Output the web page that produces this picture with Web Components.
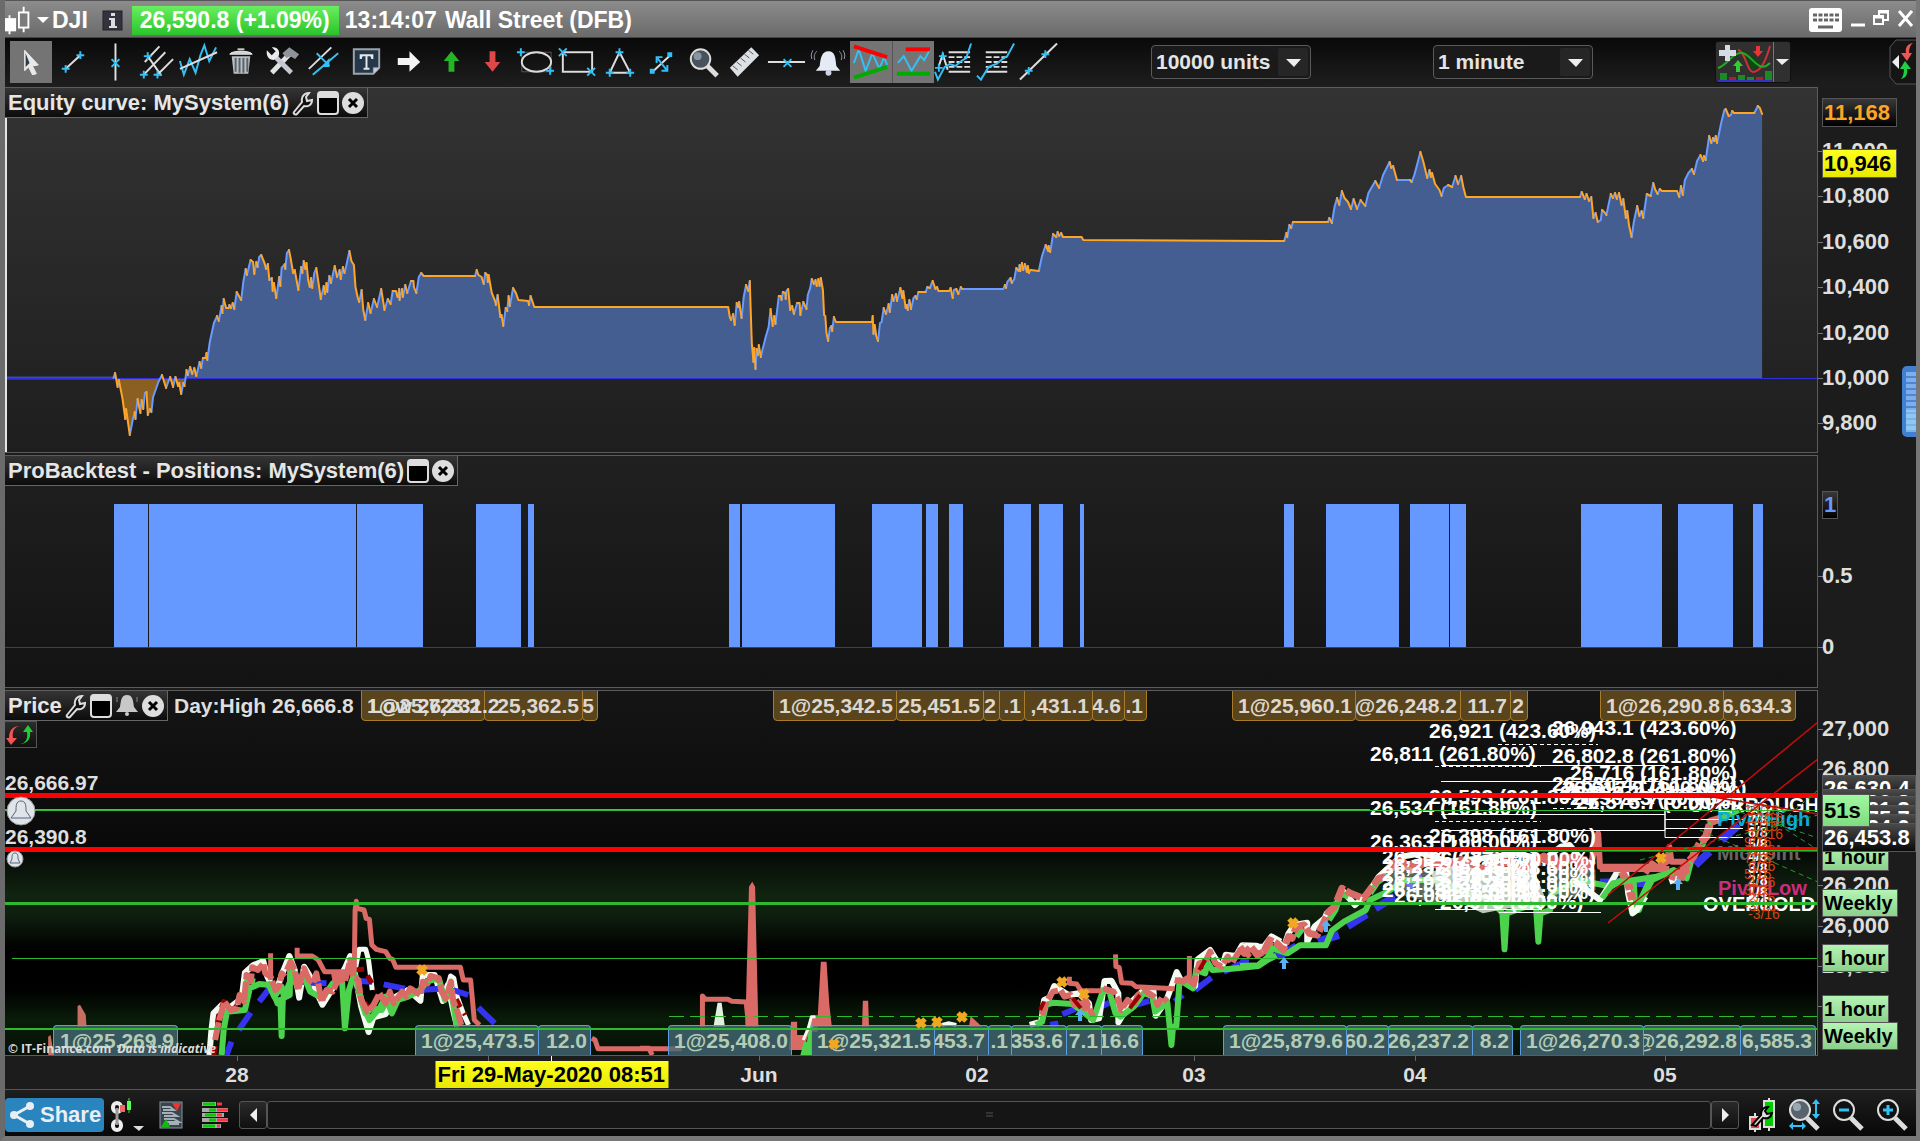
<!DOCTYPE html>
<html lang="en">
<head>
<meta charset="utf-8">
<title>DJI - Wall Street (DFB)</title>
<style>
  html, body { margin: 0; height: 100%; background: #1c1c1c; }
  body { font: bold 21px/24px "Liberation Sans", Arial, sans-serif; color: #dedede; }
</style>
</head>
<body>
<trading-window>
  <title-bar></title-bar>
  <tool-bar></tool-bar>
  <chart-stack>
    <equity-chart></equity-chart>
    <position-chart></position-chart>
    <price-chart></price-chart>
    <time-axis></time-axis>
  </chart-stack>
  <bottom-bar></bottom-bar>
</trading-window>
<script>
const define = (name, css, html) => customElements.define(name, class extends HTMLElement {
  constructor() {
    super();
    const root = this.attachShadow({ mode: 'open' });
    root.innerHTML = `<style>*{box-sizing:border-box}button{font:inherit;color:inherit;border:0;padding:0;background:none;cursor:pointer}svg{display:block}${css}</style>` + (typeof html === 'function' ? html(this) : html);
  }
});

/* Chart canvas: origin and extent in chart units, shared by drawings and labels */
const ORIGIN_X = 5, WIDTH = 1813;
const px = x => ((x - ORIGIN_X) / WIDTH * 100).toFixed(3) + '%';
const wd = w => (w / WIDTH * 100).toFixed(3) + '%';

define('trading-window', `
  :host{display:flex;flex-direction:column;height:100vh;min-height:700px;box-sizing:border-box;overflow:hidden;
    background:#1c1c1c;border:solid #777;border-width:0 4px 5px 5px;border-left-color:#6b6b6b;position:relative}
  :host::after{content:"";position:absolute;left:-5px;right:-4px;bottom:-5px;height:2px;background:#b85c0c}
`, `<slot></slot>`);

/* ---------- title bar ---------- */
define('title-bar', `
  :host{display:flex;align-items:center;height:38px;flex:none;margin:0 -4px 0 -5px;padding:2px 6px 0 4px;box-sizing:border-box;
    background:linear-gradient(#8c8c8c,#6a6a6a);border-top:1px solid #555;border-bottom:1px solid #444;color:#fff;
    font-size:23px;line-height:28px;white-space:nowrap}
  .sym{display:flex;align-items:center;gap:4px}
  .info{width:21px;height:21px;margin:0 9px 0 14px}
  .price{background:linear-gradient(#69ee5f,#2bc42b);height:29px;padding:0 8px;min-width:207px}
  .time{margin-left:6px}.name{margin-left:8px}
  .win{margin-left:auto;display:flex;align-items:center;gap:7px}
`, `
  <button class="sym" aria-label="Chart type"><svg width="28" height="34" viewBox="0 0 28 36" fill="none" stroke="#fff" stroke-width="2"><path d="M5 13v20M20 4v27"/><rect x="1" y="17" width="10" height="12" fill="#fff"/><rect x="15" y="10" width="10" height="16" fill="#7c7c7c"/></svg>
  <svg width="14" height="8"><path d="M1 1h12L7 7z" fill="#fff"/></svg></button>
  <span style="margin-left:2px">DJI</span>
  <button class="info" aria-label="Information"><svg width="21" height="21"><rect x="1" y="1" width="19" height="19" fill="#333340" stroke="#222"/><rect x="9" y="3" width="4" height="3" fill="#ddd"/><path d="M7 8h6v8h2v2H7v-2h2v-6H7z" fill="#ddd"/></svg></button>
  <span class="price">26,590.8 (+1.09%)</span><span class="time">13:14:07</span><span class="name">Wall Street (DFB)</span>
  <span class="win">
   <button aria-label="Keyboard"><svg width="35" height="26"><rect x="1" y="1" width="33" height="24" rx="3" fill="#fff"/><path d="M5 8h26M5 13h26" stroke="#666" stroke-width="3" stroke-dasharray="4 1.5"/><path d="M10 20h15" stroke="#666" stroke-width="3"/></svg></button>
   <button aria-label="Minimise"><svg width="16" height="26"><path d="M1 18h14" stroke="#fff" stroke-width="3"/></svg></button>
   <button aria-label="Restore"><svg width="17" height="26" fill="#777" stroke="#fff" stroke-width="2"><rect x="6" y="4" width="9" height="9"/><rect x="1" y="9" width="9" height="8"/><path d="M6 5h9M1 10h9" stroke-width="3"/></svg></button>
   <button aria-label="Close"><svg width="17" height="26"><path d="M2 4l13 15M15 4L2 19" stroke="#fff" stroke-width="3"/></svg></button>
  </span>`);

/* ---------- tool bar ---------- */
const W = 'stroke="#ddd" stroke-width="2" fill="none"', C = 'stroke="#35c0f5" stroke-width="2" fill="none"';
const plus = (x, y) => `<path d="M${x-4} ${y}h8M${x} ${y-4}v8" ${C}/>`;
const cross = (x, y) => `<path d="M${x-4} ${y-4}l8 8m0-8l-8 8" ${C}/>`;
const tools = [
 ['Select', '<path d="M15 9l14 15-6 1 4 8-4 1-4-8-4 4z" fill="#e8e8e8" stroke="#eee"/><path d="M16 12v14l4-4z" fill="#2d3e48"/>', 1],
 ['Segment', `<path d="M14 28L29 14" ${W}/>${plus(14,28)}${plus(29,14)}`],
 ['Vertical line', `<path d="M22 2v38" ${W}/>${cross(22,22)}`],
 ['Pitchfork', `<path d="M8 34L30 11M9 21L24 5M22 34L38 18M12 15l14 20" ${W}/>${plus(12,15)}${plus(8,34)}${plus(22,34)}`],
 ['Regression', `<path d="M2 20l4 14 6-16 6 14 5-18 4-10 5 16 7-14" ${C}/><path d="M2 28L40 11" ${W}/>`],
 ['Delete', '<path d="M12 15h19l-2 18H14z" fill="#b9bfc4"/><path d="M16 17v14M20 17v15M24 17v15M28 17v14" stroke="#59636a" stroke-width="2"/><path d="M10 13c1-4 22-4 23 0z" fill="#ccd0d4" stroke="#eee"/><path d="M18 8h7" stroke="#ccc" stroke-width="2"/>'],
 ['Settings', '<path d="M10 32L29 12" stroke="#e0e2e4" stroke-width="5"/><path d="M30 32L12 14" stroke="#c3c9ce" stroke-width="5"/><path d="M5 9l5 5 4-4-4-4c6-1 9 4 7 9l-5 4C7 19 4 15 5 9z" fill="#e8eaec"/><path d="M21 12l7-6 10 7-4 5-5-3-4 2z" fill="#8e9499"/>'],
 ['Parallel lines', `<path d="M5 28L28 6" ${W}/><path d="M9 34L35 12M13 12l13 13" ${C}/><path d="M26 17v9h-8z" fill="#35c0f5"/>`],
 ['Text', '<path d="M8 8h26v19l-6 6H8z" fill="#25384a" stroke="#9aa5ad" stroke-width="2"/><path d="M34 27h-6v6" fill="#ccd" stroke="#9aa5ad"/><path d="M14 13h14v5h-2l-1-3h-3v12h2v2h-6v-2h2V15h-3l-1 3h-2z" fill="#e5e8ea"/>'],
 ['Arrow', '<path d="M10 17h12v-7l11 11-11 10v-7H10z" fill="#f4f4f4"/>'],
 ['Up', '<path d="M22 10l8 10h-5v11h-6V20h-5z" fill="#25b525"/>'],
 ['Down', '<path d="M21 31l-8-10h5V10h6v11h5z" fill="#e04848"/>'],
 ['Ellipse', `<rect x="8" y="11" width="30" height="20" stroke="#555" fill="none"/><ellipse cx="23" cy="21" rx="15" ry="10" ${W}/>${plus(7,11)}${plus(37,30)}`],
 ['Rectangle', `<rect x="7" y="11" width="30" height="20" ${W}/>${cross(7,11)}${cross(36,31)}`],
 ['Triangle', `<path d="M22 11L12 32h21z" ${W}/>${plus(22,11)}${plus(12,32)}${plus(33,32)}`],
 ['Move', `<path d="M14 30L31 14" ${W}/><path d="M17 16l11 14m0-6v6h-6M17 22v-6h6" ${C}/><path d="M10 28h5v5h-5zM28 11h5v5h-5z" fill="#35c0f5"/>`],
 ['Zoom', '<path d="M25 24l11 11" stroke="#ddd" stroke-width="5"/><circle cx="19" cy="18" r="10" fill="#48525c" stroke="#ddd" stroke-width="2"/><circle cx="16" cy="15" r="4" fill="#8796a1"/>'],
 ['Ruler', '<path d="M6 27L28 6l8 8-22 22z" fill="#dde1e5"/><path d="M9 25l5 4M13 21l5 4M17 17l5 4M21 13l5 4M25 9l5 4" stroke="#555"/>'],
 ['Horizontal line', `<path d="M2 21h38" ${W}/>${cross(22,22)}`],
 ['Alert', '<path d="M21 10c7 0 7 7 8 15l4 5H8l4-5c1-8 2-15 9-15z" fill="#e5ebf5"/><circle cx="21" cy="32" r="3" fill="#ccd4e4"/><path d="M9 10c-3 3-3 6-2 9M5 9c-2 4-2 6-1 9M32 10c3 3 3 6 2 9M36 9c2 4 2 6 1 9" stroke="#99a" fill="none"/>'],
 ['Auto trend lines', `<path d="M4 22l5-14 7 22 7-18 7 16 5-12 3 8" ${C}/><path d="M4 5l34 11" stroke="red" stroke-width="4"/><path d="M4 37l34-11" stroke="#0a0" stroke-width="4"/>`, 1],
 ['Auto supports', `<path d="M5 22l6-7 8 15 9-15 4 4 6-11" ${C}/><path d="M13 8h25" stroke="red" stroke-width="4"/><path d="M4 33h34" stroke="#0a0" stroke-width="4"/>`, 1],
 ['Fibonacci', `<path d="M15 11h22M15 31h22" ${W}/><path d="M15 16h22M15 21h22M15 26h22" ${W} stroke-dasharray="6 2"/><path d="M5 25L9 13l5 16" ${W}/><path d="M1 31l3 8 7-13 5-3 6 2 6-5 5-3 5-15" ${C}/>${plus(9,15)}${plus(5,27)}`],
 ['Retracement', `<path d="M10 11h22M10 31h22" ${W}/><path d="M10 16h22M10 21h22M10 26h22" ${W} stroke-dasharray="6 2"/><path d="M1 35l4 4 8-13 8-3 6-5 5-3 7-13" ${C}/>`],
 ['Line', `<path d="M2 39L40 2" ${W}/>${plus(11,30)}${plus(28,13)}`],
];
define('tool-bar', `
  :host{display:flex;align-items:center;height:49px;flex:none;box-sizing:border-box;padding:0 0 1px 5px;
    background:linear-gradient(#090909,#1e1e1e);font-size:21px}
  .tools{display:flex;flex:none}
  .tools button{width:42px;height:42px}
  .on{background:#747474!important}
  .on + .on{border-left:1px solid #555}
  .pick{position:relative;display:block;flex:none;width:160px;height:34px}
  .gap1{flex:0 1 91px}.gap2{flex:0 1 122px}
  select{appearance:none;font:inherit;color:#e4e4e4;width:100%;height:34px;padding:0 0 0 4px;background:#1a1a1a;border:1px solid #5a5a5a;border-radius:4px;text-indent:0}
  .pick svg{position:absolute;right:3px;top:3px;pointer-events:none}
  .ind{display:flex;flex:none;width:76px;height:42px;background:#303030;border:1px solid #111;border-radius:3px}
  .ind button{flex:none}
  .ind button+button{border-left:1px solid #777;width:18px;display:flex;align-items:center;justify-content:center}
  .tab{margin-left:auto;width:27px;height:46px}
`, `
  <div class="tools">${tools.map(([n, s, on]) => `<button aria-label="${n}" ${on ? 'class="on"' : ''}><svg viewBox="0 0 42 42" width="41" height="42">${s}</svg></button>`).join('')}</div>
  <span class="gap1"></span>
  <label class="pick"><select aria-label="Units"><option>10000 units</option></select><svg width="30" height="28"><rect width="30" height="28" rx="2" fill="#262626"/><path d="M8 11h15l-7 8z" fill="#eee"/></svg></label>
  <span class="gap2"></span>
  <label class="pick"><select aria-label="Timeframe"><option>1 minute</option></select><svg width="30" height="28"><rect width="30" height="28" rx="2" fill="#262626"/><path d="M8 11h15l-7 8z" fill="#eee"/></svg></label>
  <span class="gap2"></span>
  <span class="ind"><button aria-label="Add indicator"><svg width="57" height="40" viewBox="0 0 57 40">
    <path d="M22 8c8 2 9 22 15 22S49 22 54 4" stroke="#c33" stroke-width="2" fill="none"/><path d="M27 10c5 4 6 16 11 18l5-8c-5-5-9-10-16-10z" fill="#0c4a10"/>
    <path d="M2 26c10-3 14-16 24-15s16 22 28 10" stroke="#2a2" stroke-width="2" fill="none"/>
    <path d="M9 3h5v5h6v6h-6v5H9v-5H3V8h6z" fill="#d5dae5"/><path d="M22 18l5 6h-3v6h-4v-6h-3z" fill="#3c3"/><path d="M42 15l5-6h-3V4h-4v5h-3z" fill="#e33"/>
    <path d="M4 31h7v7H4zM22 33h7v5h-7zM31 35h7v3h-7zM49 29h7v9h-7z" fill="#1a8a22"/><path d="M13 35h7v3h-7zM40 35h7v3h-7z" fill="#a22"/><path d="M2 39h54" stroke="#33c" stroke-width="2"/></svg></button>
    <button aria-label="More indicators"><svg width="13" height="8"><path d="M0 1h13L6 7z" fill="#eee"/></svg></button></span>
  <button class="tab" aria-label="Show panel"><svg width="27" height="46" viewBox="0 0 27 46"><path d="M27 1H7L1 8v30l6 7h20" fill="#151515" stroke="#555"/><path d="M10 16v14l-7-7z" fill="#eee"/><path d="M24 4c-6 1-8 5-7 10h-5l6 8 5-8h-3c0-4 1-8 4-10z" fill="#e55"/><path d="M12 40c5-1 7-5 6-10h4l-6-8-5 8h4c0 4-1 8-3 10z" fill="#2c4"/></svg></button>`);

/* ---------- panel pieces ---------- */
const wrench = '<svg width="22" height="26" viewBox="0 0 22 26"><path d="M2 22l8-10c-1-5 2-9 7-9l-3 4 1 4 5-1c0 5-4 7-8 6l-7 8c-2 1-4 0-3-2z" fill="#111" stroke="#ddd" stroke-width="2"/></svg>';
const maxi = '<svg width="22" height="24"><rect x="1" y="1" width="20" height="22" rx="3" fill="#000" stroke="#ddd" stroke-width="2"/><path d="M2 4h18" stroke="#ddd" stroke-width="6"/></svg>';
const close = '<svg width="22" height="24"><ellipse cx="11" cy="12" rx="11" ry="11" fill="#ddd"/><path d="M7 8l8 8m0-8l-8 8" stroke="#000" stroke-width="3"/></svg>';
const bell = '<svg width="24" height="24" viewBox="0 0 24 24"><path d="M12 1c6 0 6 6 7 12l4 5H1l4-5C6 7 6 1 12 1z" fill="#c8c8c8"/><circle cx="12" cy="20" r="2" fill="#ccc"/><path d="M2 3v5M22 3v5" stroke="#888"/></svg>';
define('panel-header', `
  :host{position:absolute;left:0;top:0;z-index:3;display:flex;align-items:center;gap:3px;height:31px;box-sizing:border-box;padding:0 3px 0 3px;
   background:linear-gradient(#353535,#0c0c0c);border:1px solid #666;border-left:0;white-space:nowrap;color:#e6e6e6;font-size:22px}
`, el => `<slot></slot>` + (el.getAttribute('icons') || '').split(' ').map(i =>
   `<button aria-label="${i}">${{ wrench, maxi, close, bell }[i]}</button>`).join(''));

const panelCss = (bg) => `
  :host{display:grid;grid-template-columns:minmax(0,1813fr) 98px;min-height:0;position:relative}
  .plot{position:relative;overflow:hidden;background:${bg}}
  .plot::after{content:"";position:absolute;inset:0;border:1px solid #5c5c5c;border-left:0;z-index:4;pointer-events:none}
  .plot>svg{position:absolute;inset:0;width:100%;height:100%}
  .axis{position:relative;background:#1c1c1c;font-size:22px}
  .axis span{position:absolute;left:4px;line-height:24px;height:24px;margin-top:-12px;white-space:nowrap}
  .axis i{position:absolute;left:0;width:5px;height:1px;background:#777}
  .axis .tag{border:1px solid #555;padding:0 1px;left:4px;z-index:2}
  .axis .small{font-size:20px}
`;
const axis = (top, h, labels, extra = '') => `<div class="axis">${labels.map(([t, y]) =>
  `<i style="top:${((y - top) / h * 100).toFixed(3)}%"></i><span style="top:${((y - top) / h * 100).toFixed(3)}%">${t}</span>`).join('')}${extra}</div>`;
const tag = (top, h, t, y0, y1, w, bg, col, z = 2, cls = '') => `<span class="tag ${cls}" style="top:${((y0 - top) / h * 100).toFixed(3)}%;margin-top:0;height:${y1 - y0}px;line-height:${y1 - y0 - 2}px;width:${w}px;background:${bg};color:${col};z-index:${z}">${t}</span>`;

/* ---------- equity curve ---------- */
const runs = [
 [0, 2.45, 220, `13,475 278,475 282,459 288,500 291,480 300,535 307,598 309,567 318,646 325,600 330,575 332,597 337,537 344,578 347,540 351,568 355,520 359,516 362,586 368,568 371,577 375,530 383,505 388,485 397,465 407,504 412,485 417,470 424,502 430,470 436,497 439,488 444,523 449,490 452,498 457,450 460,465 466,440 471,462 476,443 481,468 489,427 493,444 497,415 503,413 506,400 508,420 514,365 524,310 532,288 536,304 543,258 545,280 548,238 554,265 560,265 562,255 566,265 570,250 574,268 580,215 591,241 596,185 602,147 605,165 614,119 620,125 623,162 628,125 631,140 635,110 640,104 648,130 652,148 656,133 660,180 666,175 668,212 671,190 677,235 684,172 687,198 690,145 698,132 699,148 703,100 708,90 712,115 718,158 722,150 731,210 738,140 741,160 744,122 748,148 751,128 755,180 759,200 762,175 765,205 770,160 775,143 780,185 786,236 793,198 796,222 800,190 802,215 807,168 811,190 820,137 826,170 832,150 835,178 840,140 844,160 850,130 856,92 861,122 867,135 871,200 876,230 880,245 886,210 890,270 895,300 902,248 908,280 916,237 924,262 934,208 942,270 950,238 957,252 962,212 970,213 974,232 978,208 979,240 985,208 987,232 993,195 998,220 1007,182 1013,183 1014,200 1020,220 1026,170 1032,158 1038,167 1164,167 1168,149 1172,166 1180,172 1185,192 1189,160 1194,165 1195,185 1197,165 1205,220 1214,245 1215,255 1219,225 1226,290 1229,285 1233,318 1239,265 1243,272 1246,228 1249,258 1257,205 1264,220 1270,241 1294,242 1296,255 1300,227 1309,262`],
 [640, 2.45, 220, `216,262 220,290 223,300 228,282 232,315 237,250 240,262 243,247 249,295 254,230 260,195 265,212 269,182 271,260 274,370 278,425 280,385 283,447 286,388 289,405 291,375 296,410 300,390 308,350 315,320 320,267 325,318 329,287 332,312 340,228 345,227 347,240 350,217 356,218 357,238 359,212 363,208 368,270 373,258 377,283 385,248 391,250 393,286 400,245 408,268 411,225 417,205 421,176 426,192 430,180 433,198 437,176 440,197 443,175 448,210 451,285 454,288 457,340 461,363 465,325 469,318 471,334 475,290 480,307 568,307 570,288 572,342 575,315 579,347 583,363 588,310 592,307 597,265 603,283 609,253 612,275 618,225 621,243 627,222 630,243 638,205 643,235 645,213 651,265 654,255 656,270 660,240 664,268 670,235 675,228 678,236 682,217 700,217 704,200 710,203 717,183 724,208 728,200 731,214 757,214 761,204 766,235 769,210 775,208 780,222 786,201 790,207 890,206 894,195 897,205 900,185 908,174 911,190 917,178 922,143 928,152 930,135 932,152 936,128 939,150 943,133 948,155 950,138 953,160 957,151 977,152 985,108 994,75 1000,92 1001,78 1005,97 1012,42 1020,50 1023,36 1027,48 1032,40 1036,52 1082,52 1086,61`],
 [1240, 2.306, 90, `102,452 107,430 109,441 114,405 118,414 122,397 203,397 206,383 212,398 218,350 224,323 229,346 235,303 241,325 249,335 256,356 262,327 270,356 278,330 289,348 296,310 312,273 321,294 330,255 345,216 349,235 353,227 362,270 392,269 396,275 402,255 410,215 416,186 423,215 432,265 437,240 440,262 443,250 450,283 460,300 465,318 470,293 480,285 489,290 497,257 503,283 510,257 515,290 521,320 784,320 788,305 795,328 799,312 805,333 810,322 815,383 820,368 825,396 832,390 835,360 840,365 845,374 855,312 860,325 865,310 869,328 874,310 880,345 884,327 890,385 893,363 897,405 903,440 908,395 916,348 921,377 926,362 930,383 938,312 947,318 953,280 957,297 963,312 968,296 973,304 1008,304 1013,320 1017,288 1021,315 1026,270 1034,250 1042,237 1047,252 1054,213 1062,195 1068,212 1070,198 1074,210 1082,138 1087,160 1091,145 1094,152 1097,138 1100,158 1110,97 1117,60 1120,56 1127,77 1132,76 1135,63 1139,70 1186,70 1194,47 1199,55 1204,72`]];
const equity = runs.flatMap(([x0, s, y0, d]) => d.split(' ').map(p => { const [x, y] = p.split(',').map(Number); return [+(x0 + x / s).toFixed(1), Math.round(y0 + y / 3)]; }));
let up = '', down = '';
for (let i = 2; i < equity.length; i++) {
  const [a, b] = [equity[i - 1], equity[i]], seg = `M${a}L${b}`;
  if (b[1] < a[1] || (a[1] === b[1] && (Math.abs(a[0] - 962) < 2 || Math.abs(a[0] - 1397) < 2))) up += seg; else down += seg;
}
const area = `M5,378L${equity.join('L')}V378Z`;
define('equity-chart', panelCss('linear-gradient(#333,#1e1e1e)'), `
 <div class="plot"><svg viewBox="5 87 1813 366" preserveAspectRatio="none">
  <clipPath id="a"><rect x="0" y="87" width="1820" height="291"/></clipPath><clipPath id="b"><rect x="0" y="378" width="1820" height="80"/></clipPath>
  <path d="${area}" fill="#455e92" clip-path="url(#a)"/><path d="${area}" fill="#8a5f20" clip-path="url(#b)"/>
  <path d="M114 378h-109" stroke="#3f4f90" stroke-width="3"/><path d="M5 378.5H1818" stroke="#3030e0"/>
  <path d="${up}" stroke="#6a9bff" stroke-width="2" stroke-linecap="round"/><path d="${down}" stroke="#ffa526" stroke-width="2" stroke-linecap="round"/>
  <path d="M6 118V452" stroke="#e4e4e4" stroke-width="2"/></svg>
  <panel-header icons="wrench maxi close">Equity curve: MySystem(6)</panel-header></div>
 ${axis(87, 366, [['11,000',151],['10,800',196],['10,600',242],['10,400',287],['10,200',333],['10,000',378],['9,800',423]],
   tag(87,366,'11,168',98,127,75,'linear-gradient(#383838,#000)','#ffa526') + tag(87,366,'10,946',149,178,75,'linear-gradient(#ffff20,#e8e800)','#000'))}`);

/* ---------- positions ---------- */
const bars = [[114,148],[149,356],[357,423],[476,521],[528,534],[729,740],[742,835],[872,922],[926,938],[949,963],[1004,1031],[1039,1063],[1080,1084],[1284,1294],[1326,1399],[1410,1449],[1450,1466],[1581,1662],[1678,1733],[1753,1763]];
define('position-chart', panelCss('linear-gradient(#202020,#131313)'), `
 <div class="plot"><svg viewBox="5 455 1813 233" preserveAspectRatio="none">
  ${bars.map(([a, b]) => `<rect x="${a}" y="504" width="${b - a}" height="143" fill="#6699ff"/>`).join('')}
  <path d="M5 647.5H1818" stroke="#3030c8"/></svg>
  <panel-header icons="maxi close">ProBacktest - Positions: MySystem(6)</panel-header></div>
 ${axis(455, 233, [['0.5',576],['0',647]], tag(455,233,'1',491,519,16,'linear-gradient(#383838,#000)','#6699ff'))}`);

/* ---------- price ---------- */
const L = (d, c, w, x = '') => `<path d="M${d}" fill="none" stroke="${c}" stroke-width="${w}" stroke-linejoin="round" vector-effect="non-scaling-stroke" ${x}/>`;
const RED = '#d96a66', GRN = '#4cd24c', WHT = '#f2faf2', BLU = '#3434f0', DRK = '#900';
const left = `<g transform="translate(0 680) scale(.40816 .33333)">
 <path d="M190 1040V978l6-4 14 30 2 36zM118 1125v-55l6-5 8 60z" fill="#c76e60"/>
 ${L('513,1125 518,1050 523,1000 543,975 560,985 592,955 600,878 620,856 645,843 655,890 675,940 690,885 709,828 722,870 733,953 745,860 765,900 775,935 790,974 810,935 830,895 845,865 858,828 868,870 885,980 903,1056 915,1012 945,1002 970,950 1000,930 1030,962 1036,885 1065,885 1085,963 1097,915 1112,1000 1120,1040',WHT,6)}
 ${L('870,870 880,808 896,808 903,840 912,930M1097,920 1104,888 1112,895 1120,950 1135,1000 1148,1035',WHT,5)}
 ${L('555,1125 567,1085M585,1050 614,998M635,965 660,925M705,908 745,905M760,908 800,910M870,902 912,905M940,913 992,926M1025,930 1078,926M1110,930 1147,945M1172,983 1212,1030',BLU,6)}
 ${L('524,1125 535,1010 548,965 570,990 590,965 612,905M870,870 892,868 920,930M860,880 880,940 905,990 940,985M1100,915 1125,975 1140,1005',DRK,5,'stroke-dasharray="9 7"')}
 ${L('543,1125 548,1050 556,995 600,990 612,925 635,912 662,915 680,970 687,960 690,1068 693,955 710,945 711,850 728,920 745,890 760,935 790,955 815,910 838,900 845,1045 855,930 868,880 890,980 905,1020 930,985 945,950 960,1000 975,960 1000,950 1030,930 1045,905 1075,895 1090,960 1105,930 1118,1030 1125,1038',GRN,6)}
 ${L('598,960 606,900 625,905M655,905 672,950 690,920 696,950 712,900M880,940 895,1000 912,985 935,990 948,960 962,990',GRN,6)}
 ${L('527,1080 537,1020 550,965 565,990 580,985 587,945 598,965 604,885 615,900 618,862 632,870 645,850 650,880 663,890 675,930 685,915 690,880 698,890M703,870 712,845 722,870 730,930 745,865 757,900 767,910 775,880 788,965 800,930 815,935 830,895 845,905 858,840 866,890 878,900 885,960 900,995 915,975 930,940 945,970 955,935 965,970 985,935 995,950 1005,925 1030,945 1036,905 1048,910 1055,888 1075,895 1082,935 1092,955 1105,905 1110,960 1122,1000 1130,1035',RED,6,'stroke-dasharray="18 2"')}
 ${L('663,820V900M728,803V828L765,828 780,840 795,875 845,875 868,870 870,690 873,664 875,685 892,690 897,715 905,718 911,795 922,808 945,815 955,835 962,838 970,862 1128,862 1135,900 1153,900 1162,1020 1175,1035M1450,1075 1458,1080 1465,1106 1670,1106',RED,5)}
 <path d="M810 872h40l-5 35h-30z" fill="${RED}"/></g>`;
const mid = `<g transform="translate(640 680) scale(.40816 .33333)">
 ${L('153,1040 153,948 160,958 215,958 225,964 260,966 266,1035',RED,5)}
 <path d="M180 1040l10-72h10l8 72z" fill="#dff0df"/><path d="M258 1040l9-420 8-15 7 15 8 420zM434 1040l9-195h14l7 130 6 65zM544 1040l2-78h13l2 78zM370 1025h15v40h20l15-55 15-5v50h-20l-15 55h-35zM806 1040l4-32 28 32z" fill="${RED}"/>
 <path d="M393 1125l8-40 8 0 8-60 4 0v100z" fill="${GRN}"/>${L('400,1080 412,1045 420,1010 430,1010',WHT,3)}
 ${L('740,1035 755,1030 775,1035',WHT,4)}
 ${L('0,1105 22,1105 30,1125',RED,5)}
 ${L('1005,1035 1025,1030M1035,1003 1070,985M1120,985 1150,968M1215,975 1248,963M1310,965 1330,945M1360,930 1400,893M1430,875 1475,850M1520,850 1560,825',BLU,6)}
 ${L('955,1035 983,1025 990,960 1003,953 1015,918 1050,945 1075,940 1100,970 1105,1020 1125,1015 1138,903 1155,902 1172,940 1172,1027 1200,970 1230,935 1258,932 1264,1007 1290,960 1315,876 1325,900 1360,918 1366,838 1397,810 1425,865 1435,824 1460,828 1475,796 1510,797 1530,812 1548,770 1570,785',WHT,6)}
 ${L('970,1035 985,1025 995,975 1012,968 1060,972 1080,990 1110,1020 1135,930 1150,935 1165,1000 1178,1010 1210,980 1235,938 1255,950 1262,995 1292,968 1302,1095 1306,1040 1314,1040 1322,900 1355,925 1363,870 1385,880 1390,845 1402,870 1450,866 1515,858 1540,838 1570,820',GRN,6)}
 ${L('985,1005 997,962 1012,935 1030,930 1040,950 1055,945 1065,975 1085,960 1090,985 1105,985M1085,940 1110,1010M1135,925 1160,935 1172,960 1178,990 1195,960 1210,975 1220,945 1235,930 1260,950 1268,975 1280,950 1292,965M1310,900 1330,905 1340,895 1357,912 1370,850 1385,845 1397,815 1410,850 1425,860 1440,830 1450,850 1465,820 1480,800 1490,825 1500,805 1515,825 1530,815 1548,785 1570,795',RED,6,'stroke-dasharray="14 3"')}
 ${L('1052,890V910L1070,912 1080,932 1130,932M1165,823 1166,860 1174,862 1180,908 1205,910 1215,920 1310,926M1346,905V828',RED,5)}
 ${L('980,990 990,965M1060,955 1080,985M1200,985 1225,945M1370,870 1385,840',DRK,4)}</g>`;
const right = `<g transform="translate(1240 680) scale(.43366 .33333)">
 ${L('0,846 20,850M85,830 130,800M180,785 228,765M248,738 292,702M312,685 357,650M385,620 420,590M830,608 880,606M895,608 940,610M1050,555 1083,515M1110,480 1150,435',BLU,8)}
 ${L('0,800 30,800 55,800 72,770 88,785 100,805 112,760 125,735 155,728 155,785 172,740 195,715 200,700 218,690 235,630 265,675 295,640 320,590 345,560 370,530 420,520 480,545 560,535 640,520 700,540 740,500 760,495 800,560',WHT,6)}
 ${L('0,858 42,856 65,830 75,805 110,820 138,796 198,796 212,752 240,725 290,690 300,660 345,632 380,600 460,600 520,640 580,660 605,700 610,808 615,700 682,670 688,785 693,700 715,690 720,640 780,600 855,620 880,600 908,610 912,690 920,690 930,650 950,600 1000,570 1030,595 1045,520 1065,500 1085,430 1150,390',GRN,6)}
 ${L('130,770 145,745M205,720 220,690 232,640 250,650M300,640 318,605 335,590 345,600',GRN,6)}
 ${L('0,800 10,820 25,800 40,825 55,815 68,780 85,790 100,810 112,770 120,775 130,740 148,735 160,760 178,765 190,735 205,695 218,680 235,625 255,640 285,655 305,620 320,595 335,590 345,565 365,560 420,545 500,570 620,560 700,545 740,530 800,540',RED,7,'stroke-dasharray="16 2"')}
 ${L('345,560 370,540 395,570 430,545 470,560 510,540 560,570 610,545 650,565 700,530 730,560 770,530 790,570 815,540',RED,8)}
 <path d="M440 575l60-20 60 15 60-10 60 15 30 100-50 15-40-5-60 15-50-30-50-10z" fill="#e5f3e5" opacity=".8"/>
 <path d="M345 565l40-5 70 20v90l-70-20-40-25zM710 570l50-10 60 10v60l-60 25-50-5z" fill="#e5f3e5" opacity=".35"/>
 ${L('770,600 830,660 850,620 870,575 890,570 895,640 905,700 915,690 935,650M990,605 1020,590',WHT,6)}
 ${L('818,460 812,540 826,460 830,560 965,560 985,545 990,500 995,545 1025,545 1030,575 1000,580 995,600M830,567 990,567M935,580 950,550 970,570',RED,6)}
 ${L('880,575 895,610 905,660M1015,600 1025,560 1045,530 1060,490 1075,470 1085,425 1110,415',RED,8,'stroke-dasharray="20 2"')}
 ${L('835,655 860,610 960,590 1000,575M920,670 945,600',GRN,6)}</g>`;
const star = (x, y) => `<path d="M${x-4} ${y-4}l8 8m0-8l-8 8" stroke="#f0a820" stroke-width="5"/>`;
const arr = (x, y) => `<path d="M${x} ${y}l5 6h-3v6h-4v-6h-3z" fill="#5ab0f8"/>`;
const under = `<g fill="none">
 <g stroke="#fff"><path d="M1441 765.5H1665M1441 781.5H1660M1441 814.5H1665M1441 830.5H1665l0-34v41h78M1665 819.5h78M1665 828.5h78M1435 909.5h107M1499 912.5h102"/>
 <path d="M1498 744.5h100M1435 766.5h106M1553 808.5h48M1435 821.5h106" stroke-dasharray="4 3"/></g></g>`;
const over = `<g fill="none">
 <path d="M12 958.5H1818M5 810.5H1818M1485 850.5H1818" stroke="#2fb92f"/><path d="M5 809.5H1370" stroke="#c08060"/><path d="M669 1016.5H1818" stroke="#2fb92f" stroke-dasharray="15 6"/>
 <path d="M5 903.5H1818" stroke="#2fb92f" stroke-width="3"/><path d="M5 1029H1818" stroke="#2fb92f" stroke-width="2"/>
 <path d="M5 795.5H1818M5 849.5H1818" stroke="red" stroke-width="5"/><path d="M1485 850.5H1818" stroke="#2fb92f"/>
 <g stroke="#2a9a2a" stroke-dasharray="5 4"><path d="M1640 860L1818 815M1700 830L1818 882M1740 800L1818 850M1740 812L1818 838M1760 840L1818 790"/></g>
 <g stroke="#c40c0c" stroke-width="1.5"><path d="M1608 923L1818 759M1608 895L1818 722M1700 795L1818 814"/></g></g>
 ${star(422,970)}${star(1062,982)}${star(1084,994)}${star(962,1017)}${star(937,1022)}${star(921,1023)}${star(834,1044)}${star(1293,923)}${star(1661,858)}
 ${arr(1080,1009)}${arr(1284,957)}${arr(1326,920)}${arr(1678,878)}`;
const fib = [[1429,731,'26,921 (423.60%)'],[1370,754,'26,811 (261.80%)'],[1552,728,'26,943.1 (423.60%)'],[1552,756,'26,802.8 (261.80%)'],[1570,773,'26,716 (161.80%)'],
 [1552,784,'26,630.4 (161.80%)'],[1562,788,'26,612.9 (100.00%)'],[1560,793,'26,589.1 (61.80%)'],[1570,798,'26,581.3 (50.00%)'],[1576,802,'26,575.7 (0.00%)'],
 [1429,797,'26,593 (261.80%)'],[1370,808,'26,534 (161.80%)'],[1429,836,'26,398 (161.80%)'],[1370,842,'26,363 (100.00%)'],
 [1382,857,'26,304 (78.60%)'],[1429,859,'26,277 (100.00%)'],[1382,866,'26,257 (61.80%)'],[1440,868,'26,235 (78.60%)'],[1382,874,'26,225 (50.00%)'],[1440,876,'26,202 (61.80%)'],[1382,883,'26,192 (38.20%)'],[1440,885,'26,178 (50.00%)'],[1382,890,'26,153 (23.60%)'],[1440,892,'26,153 (38.20%)'],[1394,896,'26,086 (0.00%)'],[1440,902,'26,075 (0.00%)']];
const fans = Array.from({ length: 14 }, (_, i) => [i % 2 ? 1748 : 1744, 810 + i * 8, i > 11 ? '-3/16' : `${13 - i}/16`]);
const eighths = Array.from({ length: 9 }, (_, i) => [1748, 808 + i * 12, `${8 - i}/8`]);
const tags = (list, cls) => list.map(([a, b, t]) => `<span class="${cls}" style="left:${px(a)};width:${wd(b - a + 1)}">${t}</span>`).join('');
const sells = [[361,484,'1@25,723.2'],[484,582,'25,362.5'],[582,597,'5'],[773,896,'1@25,342.5'],[896,983,'25,451.5'],[983,999,'2'],[999,1024,'.1'],[1024,1092,',431.1'],[1092,1124,'4.6'],[1124,1146,'.1'],[1232,1355,'1@25,960.1'],[1355,1460,'@26,248.2'],[1460,1510,'11.7'],[1510,1527,'2'],[1600,1723,'1@26,290.8'],[1723,1795,'6,634.3']];
const buys = [[53,177,'1@25,269.9'],[415,538,'1@25,473.5'],[538,590,'12.0'],[668,791,'1@25,408.0'],[811,934,'1@25,321.5'],[934,988,'453.7'],[988,1011,'.1'],[1011,1066,'353.6'],[1066,1101,'7.1'],[1101,1142,'16.6'],[1223,1346,'1@25,879.6'],[1346,1388,'60.2'],[1388,1472,'26,237.2'],[1472,1512,'8.2'],[1520,1643,'1@26,270.3'],[1643,1740,'@26,292.8'],[1740,1815,'6,585.3']];
const at = (x, y, t, s = '') => `<b style="left:${px(x)};top:${((y - 690) / 366 * 100).toFixed(3)}%;${s}">${t}</b>`;
const green = 'linear-gradient(#b4f4b4,#8cd08c)', dark = 'linear-gradient(#4a4a4a,#0a0a0a)';
const pt = (...a) => tag(690, 366, ...a);
define('price-chart', panelCss('linear-gradient(#151515 0%,#0a0a0a 42%,#060806 44%,#102410 56%,#0f200f 61%,#000 71%,#000 82%,#0a1c0a 90%,#061006 100%)') + `
  b{position:absolute;margin-top:-12px;line-height:24px;white-space:nowrap;color:#dedede}
  .sell,.buy{position:absolute;display:flex;justify-content:flex-end;align-items:center;overflow:hidden;white-space:nowrap;height:31px;padding-right:3px}
  .sell{top:0;background:#624a1ee8;border:1px solid #a67c2a;border-radius:0 0 4px 4px;color:#dcd8d0}
  .buy{bottom:0;background:#456a78c8;border:1px solid #5c9ce0;border-bottom:0;border-radius:4px 4px 0 0;color:#b4ccb4}
  .swap{position:absolute;left:0;top:31px;z-index:3;width:32px;height:27px;background:linear-gradient(#2c2c2c,#101010);border:1px solid #555;border-left:0}
  small{position:absolute;left:3px;bottom:0;font:bold 12px/14px "Open Sans",sans-serif;color:#ddd;white-space:nowrap}
`, `
 <div class="plot"><svg viewBox="5 690 1813 366" preserveAspectRatio="none">${left}${mid}${right}${under}</svg>
  ${fib.map(([x, y, t]) => at(x, y, t, 'color:#fff')).join('')}
  ${at(1688,805,'OVERBOUGHT','font-size:20px;color:#fff')}${at(1717,819,'PivotHigh','font-size:20px;color:#09b0dc')}${at(1717,853,'Midpoint','font-size:20px;color:#666')}${at(1718,888,'PivotLow','font-size:20px;color:#cc2c80')}${at(1703,904,'OVERSOLD','font-size:20px;color:#fff')}
  ${eighths.map(([x, y, t]) => at(x, y, t, 'font-size:14px;color:#fff')).join('')}
  ${fans.map(([x, y, t]) => at(x, y, t, 'font-size:14px;font-weight:400;color:#d84010')).join('')}
  ${tags(sells, 'sell')}${tags(buys, 'buy')}
  <svg viewBox="5 690 1813 366" preserveAspectRatio="none">${over}
  <g fill="#dfe3ea" stroke="#999"><ellipse cx="21" cy="811" rx="14" ry="14"/><path d="M21 801c5 0 5 5 5 10l5 7H11l5-7c0-5 0-10 5-10z" stroke="#567"/><circle cx="15" cy="859" r="8"/><path d="M15 853c3 0 3 3 3 6l2 4h-10l2-4c0-3 0-6 3-6z" stroke="#567"/></g></svg>
  ${at(174,706,'Day:High 26,666.8')}${at(370,706,'Low 26,231.2')}${at(5,783,'26,666.97')}${at(5,837,'26,390.8')}
  <small>© IT-Finance.com&nbsp; <em>Data is indicative</em></small>
  <panel-header icons="wrench maxi bell close">Price</panel-header>
  <button class="swap" aria-label="Swap"><svg width="31" height="25" viewBox="0 0 31 25"><path d="M15 4c-6 1-8 5-7 12h4l-6 7-5-7h3C4 8 8 4 15 4z" fill="#e55"/><path d="M15 22c6-1 8-5 7-12h-4l5-7 5 7h-3c1 7-3 12-10 12z" fill="#2c3"/></svg></button></div>
 ${axis(690, 366, [['27,000',729],['26,800',769],['26,200',885],['26,000',926],['25,800',966],['25,600',1006]],
   pt('1 hour',844,871,67,green,'#000',2,'small') + pt('Weekly',889,917,76,green,'#000',2,'small') + pt('1 hour',944,972,67,green,'#000',2,'small') + pt('1 hour',995,1023,67,green,'#000',2,'small') + pt('Weekly',1022,1050,76,green,'#000',2,'small')
   + pt('26,630.4',775,803,94,dark,'#fff') + pt('26,590.8',789,817,94,dark,'#fff') + pt('26,581.3',796,824,94,dark,'#fff') + pt('26,575.7',805,833,94,dark,'#fff') + pt('26,534.0',814,842,94,dark,'#fff')
   + pt('26,453.8',823,852,94,dark,'#fff',3) + pt('51s',794,827,48,'linear-gradient(#a0f8a0,#80dc80)','#000',4))}`);

/* ---------- time axis ---------- */
define('time-axis', `
  :host{display:block;position:relative;background:#1c1c1c;border-bottom:1px solid #555;font-size:21px}
  .in{position:absolute;inset:0 98px 0 0}
  span{position:absolute;top:7px;line-height:24px;transform:translateX(-50%)}
  i{position:absolute;top:0;width:1px;height:5px;background:#666}
  .now{top:5px;height:27px;line-height:27px;background:linear-gradient(#ffff20,#e8e800);color:#000;white-space:nowrap;padding:0 2px;font-size:22px;min-width:233px}
`, `<div class="in">${[[237,'28'],[759,'Jun'],[977,'02'],[1194,'03'],[1415,'04'],[1665,'05']].map(([x, t]) => `<i style="left:${px(x)}"></i><span style="left:${px(x)}">${t}</span>`).join('')}
 <i style="left:${px(488)}"></i><i style="left:${px(551)};background:#fff"></i><span class="now" style="left:${px(552)}">Fri 29-May-2020 08:51</span></div>`);

/* ---------- stack and side grip ---------- */
define('chart-stack', `
  :host{display:grid;flex:1;min-height:0;grid-template-rows:minmax(0,366fr) minmax(0,237fr) minmax(0,366fr) 34px;position:relative;background:#1c1c1c}
  ::slotted(position-chart){margin:2px 0}
  .grip{position:absolute;right:-4px;top:279px;width:18px;height:71px;z-index:6;border:solid #4080d0;border-width:6px 2px 5px 4px;border-radius:5px;
   background:linear-gradient(transparent 64%,#9ddcfa88 64%),repeating-linear-gradient(#80aeea 0 4px,#4d86d6 4px 6px)}
`, `<slot></slot><div class="grip"></div>`);

/* ---------- bottom bar ---------- */
define('bottom-bar', `
  :host{display:flex;align-items:center;height:46px;flex:none;background:linear-gradient(#1f1f1f,#080808);box-sizing:border-box;padding-top:3px}
  .share{display:flex;align-items:center;gap:5px;width:99px;height:34px;padding-left:4px;background:#2a84be;border-radius:4px;font-size:22px;color:#e8eef4}
  .scroll{display:flex;flex:1;height:28px;margin:0 9px 0 10px}
  .scroll button{width:28px;border:1px solid #555;border-radius:3px;background:linear-gradient(#2a2a2a,#101010);display:flex;align-items:center;justify-content:center}
  .track{flex:1;border:1px solid #555;border-radius:3px;background:#151515;display:flex;align-items:center;justify-content:center}
  .zoom{display:flex;gap:10px;padding-right:6px}
`, `
  <button class="share"><svg width="26" height="28" viewBox="0 0 26 28"><path d="M21 5L5 14l16 9" stroke="#e8eef4" stroke-width="3" fill="none"/><circle cx="21" cy="5" r="4" fill="#e8eef4"/><circle cx="5" cy="14" r="4" fill="#e8eef4"/><circle cx="21" cy="23" r="4" fill="#e8eef4"/></svg>Share</button>
  <button aria-label="Link charts" style="margin-left:5px"><svg width="38" height="36" viewBox="0 0 38 36"><g fill="none" stroke="#eee" stroke-width="4"><rect x="4" y="6" width="8" height="9" rx="4"/><rect x="4" y="24" width="8" height="9" rx="4"/></g><path d="M8 11v17" stroke="#999" stroke-width="3"/><path d="M20 1v15" stroke="#5c5"/><rect x="11" y="8" width="5" height="7" fill="#e66"/><rect x="18" y="4" width="4" height="9" fill="#5f5"/><path d="M24 29h11l-5 5z" fill="#ddd"/></svg></button>
  <button aria-label="Orders" style="margin-left:12px"><svg width="24" height="28"><rect x="1" y="1" width="22" height="26" fill="#38444e" stroke="#89949c"/><path d="M3 6h8l4 3H4M3 12h10l5 3H5M5 18h10l5 3H8M10 23h10" stroke="#a5b0b8" stroke-width="2" fill="none"/><path d="M13 2h9l-4 8z" fill="#e33"/><path d="M2 26h9L7 18z" fill="#1b1"/></svg></button>
  <button aria-label="Order book" style="margin-left:18px"><svg width="28" height="28"><path d="M1 3h14M1 9h26M1 14h22M1 19h26M1 25h19" stroke="#aaa" stroke-width="4"/><path d="M2 3h12M8 9h7M4 14h11M8 19h7M2 25h12" stroke="#0c0" stroke-width="3"/><path d="M16 3h5M16 9h11M16 14h5M16 19h11M16 25h3" stroke="#f34" stroke-width="3"/></svg></button>
  <div class="scroll"><button aria-label="Scroll left"><svg width="9" height="16"><path d="M8 1v14L1 8z" fill="#eee"/></svg></button><div class="track"><svg width="7" height="5"><path d="M0 1h7M0 4h7" stroke="#555"/></svg></div><button aria-label="Scroll right"><svg width="9" height="16"><path d="M1 1v14l7-7z" fill="#eee"/></svg></button></div>
  <div class="zoom">
   <button aria-label="Chart settings"><svg width="30" height="36" viewBox="0 0 30 36"><path d="M7 16v19M21 1v33" stroke="#ddd" stroke-width="2"/><rect x="2" y="20" width="10" height="12" fill="#e44" stroke="#ddd" stroke-width="2"/><rect x="16" y="4" width="10" height="26" fill="#0c0" stroke="#ddd" stroke-width="2"/><path d="M4 28l9-10c0-6 3-8 7-8l-3 4 2 3 5-1c-1 5-5 6-9 5l-7 8z" fill="#ddd" stroke="#000" stroke-width="2"/></svg></button>
   <button aria-label="Fit"><svg width="34" height="34" viewBox="0 0 34 34"><path d="M19 20l11 11" stroke="#ddd" stroke-width="5"/><circle cx="12" cy="12" r="10" fill="#59636d" stroke="#ddd" stroke-width="2"/><circle cx="9" cy="9" r="4" fill="#9aa8b2"/><path d="M28 4v14M4 28h12" stroke="#35c0f5" stroke-width="2"/><path d="M24 6l4-5 4 5zM24 16l4 5 4-5zM5 24l-4 4 4 4zM14 24l4 4-4 4z" fill="#35c0f5"/></svg></button>
   <button aria-label="Zoom out"><svg width="34" height="34" viewBox="0 0 34 34"><path d="M19 20l11 11" stroke="#ddd" stroke-width="5"/><circle cx="12" cy="12" r="10" fill="#111" stroke="#ddd" stroke-width="2"/><path d="M7 12h10" stroke="#35c0f5" stroke-width="3"/></svg></button>
   <button aria-label="Zoom in"><svg width="34" height="34" viewBox="0 0 34 34"><path d="M19 20l11 11" stroke="#ddd" stroke-width="5"/><circle cx="12" cy="12" r="10" fill="#111" stroke="#ddd" stroke-width="2"/><path d="M7 12h10M12 7v10" stroke="#35c0f5" stroke-width="3"/></svg></button>
  </div>`);
</script>
</body>
</html>
